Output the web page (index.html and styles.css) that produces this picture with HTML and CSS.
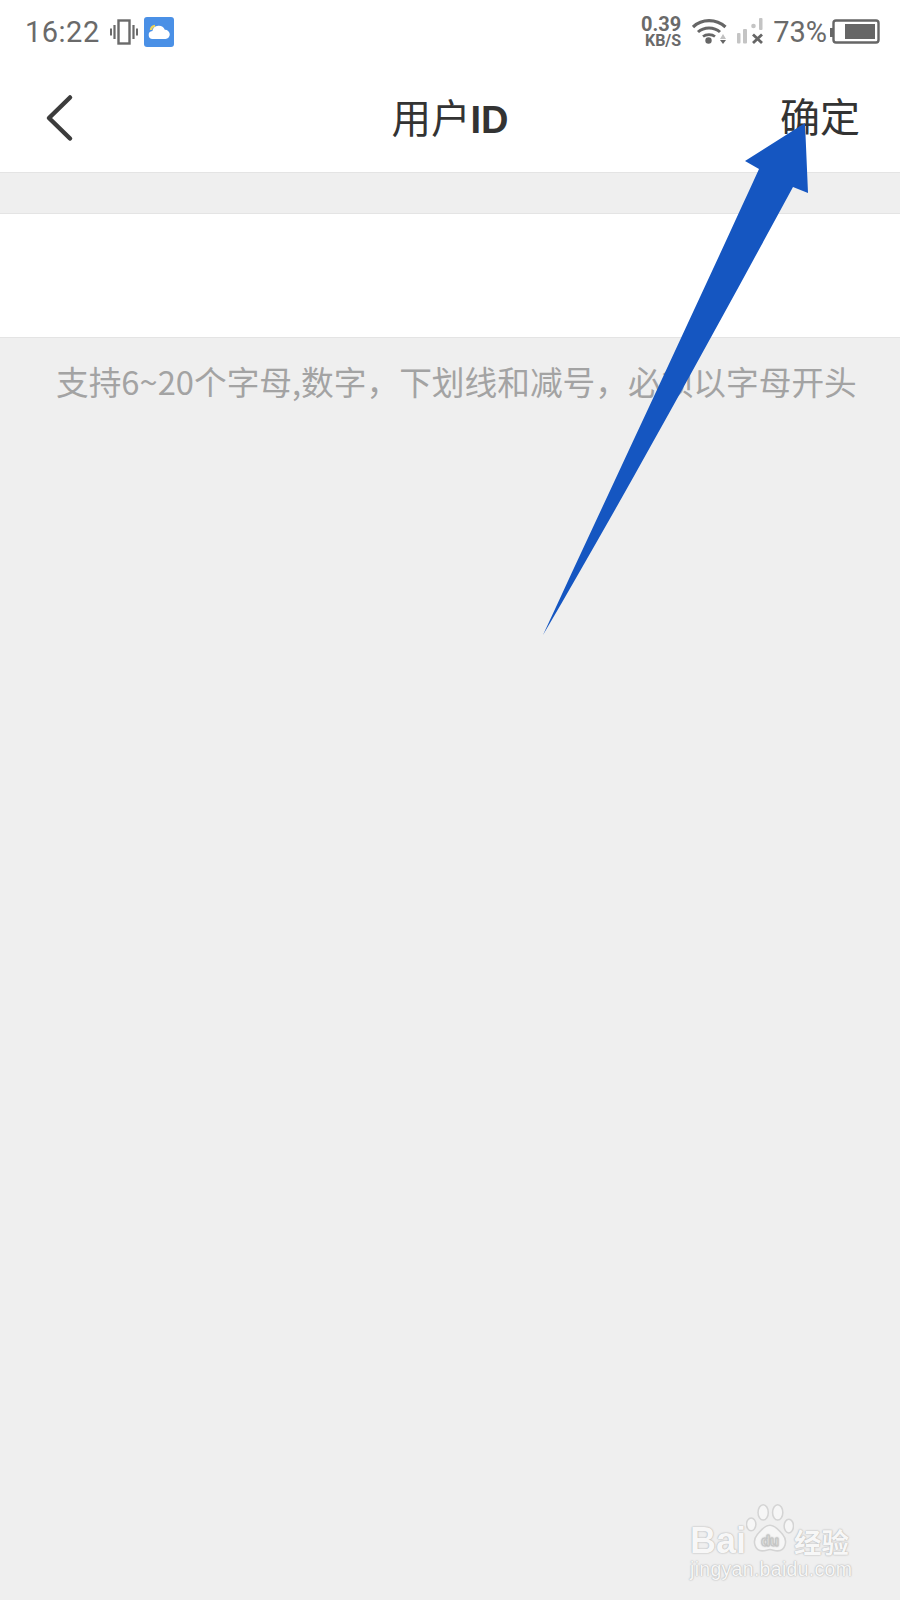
FILE: index.html
```html
<!DOCTYPE html>
<html lang="zh">
<head>
    <meta charset="UTF-8">
    <meta name="viewport" content="width=device-width, initial-scale=1.0">
    <title>用户ID</title>
    <link rel="stylesheet" href="styles.css">
</head>
<body>
    <div class="status-bar">
        <div class="status-left">
            <span class="time">16:22</span>
            <svg class="vibrate" width="28" height="28" viewBox="0 0 28 28">
                <rect x="8.5" y="2.5" width="11" height="23" fill="none" stroke="#6a6a6a" stroke-width="2.4"/>
                <path d="M4.5 7v14M23.5 7v14" stroke="#6a6a6a" stroke-width="2.2"/>
                <path d="M1 10.5v7M27 10.5v7" stroke="#6a6a6a" stroke-width="2"/>
            </svg>
            <svg class="weather" width="30" height="30" viewBox="0 0 30 30">
                <rect width="30" height="30" rx="3" fill="#4a90e6"/>
                <path d="M7 13a4 4 0 0 1 4-4" stroke="#f0d45a" stroke-width="2.4" fill="none"/>
                <path d="M9 22a4 4 0 0 1-.6-8 6.5 6.5 0 0 1 12.4-1.2A4.6 4.6 0 0 1 21.500 22z" fill="#fff"/>
            </svg>
        </div>
        <div class="status-right">
            <div class="speed"><span>0.39</span><span class="unit">KB/S</span></div>
            <svg class="wifi" width="36" height="28" viewBox="0 0 36 28">
                <path d="M1 9C10 .5 24 .5 33.500 9" fill="none" stroke="#666" stroke-width="3.200"/>
                <path d="M6 14C12 8.500 22 8.500 28 14" fill="none" stroke="#666" stroke-width="3"/>
                <path d="M11 18.500C14 16 20 16 23 18.500" fill="none" stroke="#666" stroke-width="2.600"/>
                <circle cx="16.500" cy="22.500" r="3.200" fill="#666"/>
                <path d="M28 21l3-5 3 5z" fill="#c0c0c0"/>
                <path d="M28 22h6l-3 4z" fill="#666"/>
            </svg>
            <svg class="signal" width="28" height="28" viewBox="0 0 28 28">
                <rect x="0" y="15" width="3.500" height="10.500" rx="1" fill="#c4c4c4"/>
                <rect x="6" y="11" width="4" height="14.500" rx="1" fill="#c4c4c4"/>
                <circle cx="16.500" cy="8" r="2.300" fill="#c4c4c4"/>
                <rect x="22" y="0" width="3.500" height="12" rx="1" fill="#c4c4c4"/>
                <path d="M16 16.500l9 8.500M25 16.500l-9 8.500" stroke="#666" stroke-width="2.800"/>
            </svg>
            <span class="percent">73%</span>
            <svg class="battery" width="50" height="28" viewBox="0 0 50 28">
                <rect x="0" y="10" width="3" height="9" fill="#666"/>
                <rect x="3.500" y="2.500" width="45" height="22" rx="2.500" fill="none" stroke="#666" stroke-width="2.400"/>
                <rect x="15" y="6" width="30" height="15" fill="#666"/>
            </svg>
        </div>
    </div>

    <header class="nav">
        <svg class="back" width="32" height="50" viewBox="0 0 32 50">
            <path d="M26 4.500L5 25l21 20.500" fill="none" stroke="#3c3c3c" stroke-width="4.500" stroke-linecap="round" stroke-linejoin="round"/>
        </svg>
        <h1 class="nav-title">用户<b>ID</b></h1>
        <button class="nav-action">确定</button>
    </header>

    <div class="input-row"></div>
    <p class="hint">支持6~20个字母,数字，下划线和减号，必须以字母开头</p>

    <svg class="arrow" width="900" height="700" viewBox="0 0 900 700">
        <path d="M805 123L745 161 759 169C690 320 610 490 543 635 625 495 710 340 793 187L808 193z" fill="#1556c1"/>
    </svg>

    <div class="watermark">
        <div class="wm-logo">
            <span>Bai</span>
            <svg class="wm-paw" width="48" height="53" viewBox="0 0 56 62">
                <g fill="#f6f6f6" stroke="#d4d4d4" stroke-width="1.800">
                    <ellipse cx="6" cy="25" rx="5.500" ry="7.500"/>
                    <ellipse cx="20" cy="11" rx="6" ry="9"/>
                    <ellipse cx="37" cy="11" rx="6" ry="9"/>
                    <ellipse cx="50" cy="27" rx="5.500" ry="8"/>
                    <path d="M28 26c7 0 10 6 15 11 6 7 3 19-6 19-4 0-6-1.500-9-1.500S23 56 19 56c-9 0-12-12-6-19 5-5 8-11 15-11z"/>
                </g>
                <text x="28" y="50" text-anchor="middle" class="wm-du">du</text>
            </svg>
            <span class="wm-cn">经验</span>
        </div>
        <div class="wm-url">jingyan.baidu.com</div>
    </div>
</body>
</html>
```

FILE: styles.css
```css
body {
    font-family: "Noto Sans CJK SC", "Noto Sans", sans-serif;
    background-color: #efefef;
    margin: 0;
    padding: 0;
    width: 900px;
    height: 1600px;
    position: relative;
    overflow: hidden;
    color: #333;
}

.status-bar {
    background-color: #fff;
    height: 64px;
    display: flex;
    justify-content: space-between;
    align-items: center;
    padding: 0 20px 0 25px;
    color: #6a6a6a;
}

.status-left, .status-right {
    display: flex;
    align-items: center;
}

.time {
    font-family: Roboto, sans-serif;
    font-size: 29px;
    letter-spacing: 0.5px;
}

.vibrate {
    margin-left: 10px;
}

.weather {
    margin-left: 6px;
}

.speed {
    display: flex;
    flex-direction: column;
    align-items: flex-end;
    margin-top: -1px;
    font-family: Roboto, sans-serif;
    font-weight: bold;
    font-size: 20px;
    line-height: 18px;
}

.speed .unit {
    font-size: 16px;
    line-height: 15px;
}

.wifi {
    margin-left: 11px;
}

.signal {
    margin-left: 9px;
}

.percent {
    font-family: Roboto, sans-serif;
    font-size: 29px;
    margin-left: 8px;
}

.battery {
    margin-left: 3px;
}

.nav {
    background-color: #fff;
    height: 108px;
    border-bottom: 1px solid #e4e4e4;
    display: flex;
    align-items: center;
    justify-content: space-between;
    padding: 0 40px 0 44px;
    position: relative;
}

.nav-title {
    position: absolute;
    left: 0;
    right: 0;
    top: 24px;
    margin: 0;
    text-align: center;
    font-size: 39.5px;
    line-height: 56px;
    font-weight: normal;
    pointer-events: none;
}

.nav-title b {
    font-family: "Liberation Sans", sans-serif;
    font-size: 38px;
}

.nav-action {
    background: none;
    border: none;
    padding: 0 0 6px;
    font-family: inherit;
    font-size: 40px;
    color: #333;
    cursor: pointer;
}

.input-row {
    background-color: #fff;
    height: 123px;
    margin-top: 40px;
    border-top: 1px solid #e4e4e4;
    border-bottom: 1px solid #e4e4e4;
}

.hint {
    margin: 20px 0 0 56px;
    font-size: 32.7px;
    line-height: 46px;
    white-space: nowrap;
    color: #a3a3a3;
}

/* annotation drawn over the screenshot */
.arrow {
    position: absolute;
    left: 0;
    top: 0;
}

.watermark {
    position: absolute;
    left: 690px;
    top: 1503px;
    width: 170px;
    color: #f7f7f7;
    text-shadow: 0 0 2px #b4b4b4, 0 0 1px #b4b4b4;
}

.wm-logo {
    display: flex;
    align-items: flex-end;
    font-family: "Liberation Sans", sans-serif;
    font-weight: bold;
    font-size: 36px;
    line-height: 34px;
}

.wm-paw {
    margin: 0 0 2px 0;
}

.wm-du {
    font-family: "Liberation Sans", sans-serif;
    font-size: 17px;
    fill: #f0f0f0;
    stroke: #c4c4c4;
    stroke-width: 0.5;
}

.wm-cn {
    font-family: "Noto Sans CJK SC", sans-serif;
    font-size: 27.5px;
}

.wm-url {
    font-family: "Liberation Sans", sans-serif;
    font-size: 19.5px;
    line-height: 22px;
    margin-top: 0;
    letter-spacing: 0.3px;
    white-space: nowrap;
}
```
